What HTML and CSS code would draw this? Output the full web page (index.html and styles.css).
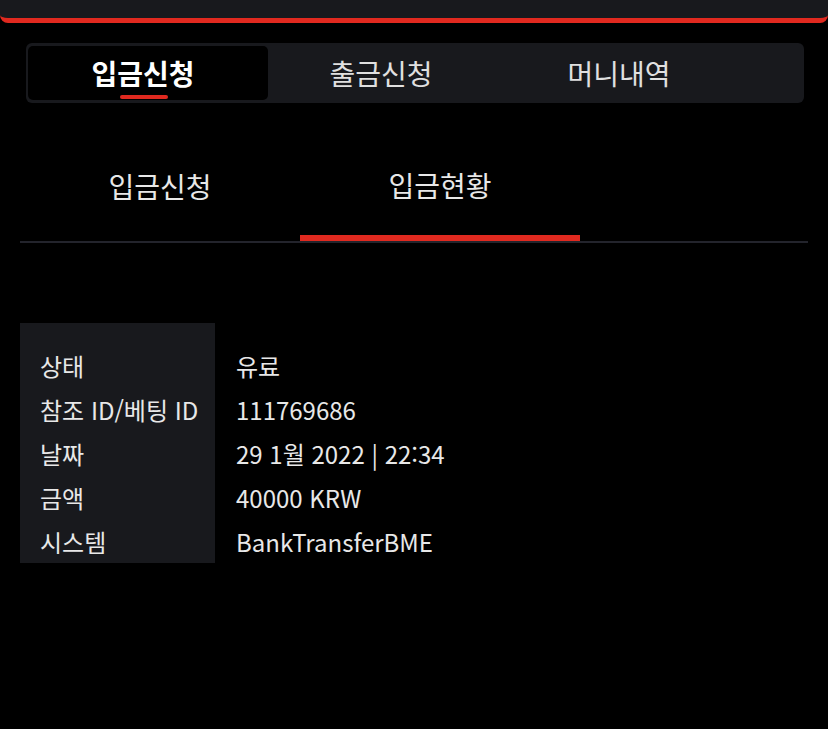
FILE: index.html
```html
<!DOCTYPE html>
<html lang="ko">
<head>
  <meta charset="UTF-8" />
  <title>입금신청</title>
  <link rel="stylesheet" href="styles.css">
</head>
<body>
  <div class="topbar"></div>

  <div class="tabs">
    <div class="tab active">입금신청</div>
    <div class="tab">출금신청</div>
    <div class="tab">머니내역</div>
  </div>

  <div class="subtabs">
    <div class="subtab">입금신청</div>
    <div class="subtab selected">입금현황</div>
  </div>

  <!-- deposit status -->
  <table class="status">
    <tr><th>상태</th><td>유료</td></tr>
    <tr><th>참조 ID/베팅 ID</th><td>111769686</td></tr>
    <tr><th>날짜</th><td>29 1월 2022 | 22:34</td></tr>
    <tr><th>금액</th><td>40000 KRW</td></tr>
    <tr><th>시스템</th><td>BankTransferBME</td></tr>
  </table>
</body>
</html>
```

FILE: styles.css
```css
body {
  margin: 0;
  background: #000;
  color: #e8e8e8;
  font-family: "Noto Sans CJK KR", "Noto Sans", sans-serif;
}
.topbar {
  height: 18px;
  background: #18191d;
  border-bottom: 5px solid #e0291f;
  border-radius: 0 0 8px 8px;
}
.tabs {
  display: flex;
  margin: 20px 24px 0 26px;
  padding: 3px 2px;
  height: 54px;
  background: #18191d;
  border-radius: 6px;
}
.tab {
  position: relative;
  width: 238px;
  box-sizing: border-box;
  padding-right: 12px;
  display: flex;
  align-items: center;
  justify-content: center;
  font-size: 28px;
  color: #e0e0e0;
}
.tab.active {
  width: 240px;
  padding-right: 10px;
  background: #000;
  border-radius: 5px;
  font-weight: bold;
  color: #fff;
}
.tab.active::after {
  content: "";
  position: absolute;
  left: 92px;
  bottom: 1px;
  width: 48px;
  height: 4px;
  background: #e0291f;
  border-radius: 2px;
}
.subtabs {
  display: flex;
  margin: 32px 20px 0;
  border-bottom: 2px solid #23242c;
}
.subtab {
  width: 280px;
  height: 106px;
  display: flex;
  align-items: center;
  justify-content: center;
  font-size: 28px;
  color: #e8e8e8;
  box-sizing: border-box;
  padding-bottom: 4px;
}
.subtab.selected {
  border-bottom: 6px solid #e0291f;
  padding-bottom: 0;
}
.status {
  margin: 80px 20px 0;
  border-collapse: collapse;
  font-size: 24px;
}
.status th {
  background: #18191d;
  font-weight: normal;
  text-align: left;
  padding: 0 0 0 20px;
  width: 175px;
  height: 44px;
  color: #e8e8e8;
  white-space: nowrap;
}
.status tr:first-child th {
  padding-top: 20px;
}
.status td {
  padding: 0 21px;
  height: 44px;
}
.status tr:first-child td {
  padding-top: 20px;
}
```
